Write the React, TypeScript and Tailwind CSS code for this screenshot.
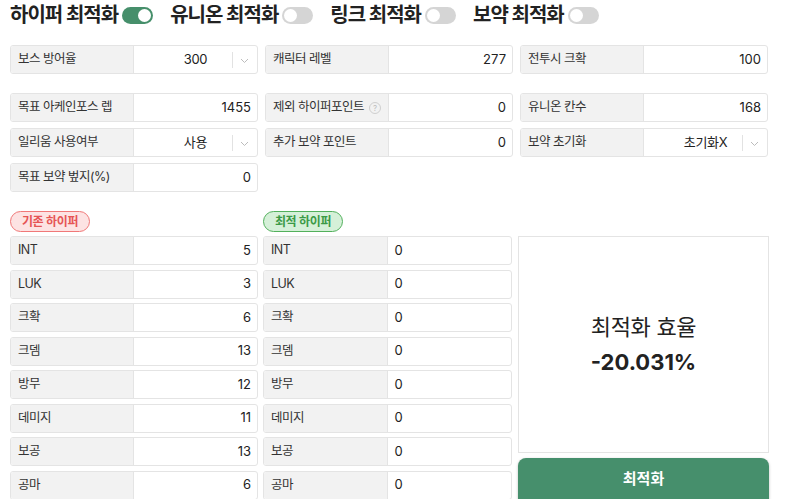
import React from "react";

function Toggle({ on }: { on: boolean }) {
  return (
    <div
      className={`flex h-[17px] w-[31px] items-center rounded-full px-[2px] ${
        on ? "justify-end bg-[#468f6b]" : "justify-start bg-[#d5d5d5]"
      }`}
    >
      <div className="h-[13px] w-[13px] rounded-full bg-white" />
    </div>
  );
}

function TitleItem({ text, on }: { text: string; on: boolean }) {
  return (
    <div className="flex items-center gap-[4px]">
      <span className="whitespace-nowrap text-[20px] font-bold leading-none tracking-[-1px] text-[#222]">
        {text}
      </span>
      <Toggle on={on} />
    </div>
  );
}

function Chevron() {
  return (
    <svg width="9" height="6" viewBox="0 0 9 6" fill="none">
      <path d="M1 1l3.5 3.5L8 1" stroke="#bcbcbc" strokeWidth="1" />
    </svg>
  );
}

function Field({
  label,
  value,
  select,
  help,
  align = "right",
}: {
  label: string;
  value: string;
  select?: boolean;
  help?: boolean;
  align?: "right" | "left";
}) {
  return (
    <div className="flex h-[29px] overflow-hidden rounded-[3px] border border-[#e4e4e4] text-[13px]">
      <div className="flex w-1/2 items-center gap-[5px] whitespace-nowrap border-r border-[#e4e4e4] bg-[#f2f2f2] pl-[7px] text-[#333]">
        <span className="text-[12.5px] tracking-[-0.5px]">{label}</span>
        {help && (
          <span className="flex h-[12px] w-[12px] items-center justify-center rounded-full border border-[#cfcfcf] text-[8px] leading-none text-[#bdbdbd]">
            ?
          </span>
        )}
      </div>
      {select ? (
        <div className="relative flex w-1/2 items-center justify-center text-[#222]">
          <span className="tracking-[-0.3px]">{value}</span>
          <div className="absolute right-[24px] top-[6px] h-[16px] w-px bg-[#e2e2e2]" />
          <div className="absolute right-[8px] top-[12px]">
            <Chevron />
          </div>
        </div>
      ) : (
        <div
          className={`flex w-1/2 items-center text-[#222] ${
            align === "right" ? "justify-end pr-[6px]" : "justify-start pl-[7px]"
          }`}
        >
          {value}
        </div>
      )}
    </div>
  );
}

const stats: [string, string][] = [
  ["INT", "5"],
  ["LUK", "3"],
  ["크확", "6"],
  ["크뎀", "13"],
  ["방무", "12"],
  ["데미지", "11"],
  ["보공", "13"],
  ["공마", "6"],
];

export default function App() {
  return (
    <div className="h-[499px] w-[790px] overflow-hidden bg-white pl-[10px] font-['Inter','Noto_Sans_CJK_KR',sans-serif]">
      <div className="flex h-[28px] items-center gap-[17px] pt-[2px]">
        <TitleItem text="하이퍼 최적화" on />
        <TitleItem text="유니온 최적화" on={false} />
        <TitleItem text="링크 최적화" on={false} />
        <TitleItem text="보약 최적화" on={false} />
      </div>

      <div className="mt-[17px] grid w-[758px] grid-cols-3 gap-x-[7px]">
        <Field label="보스 방어율" value="300" select />
        <Field label="캐릭터 레벨" value="277" />
        <Field label="전투시 크확" value="100" />
      </div>

      <div className="mt-[19px] grid w-[758px] grid-cols-3 gap-x-[7px] gap-y-[6px]">
        <Field label="목표 아케인포스 렙" value="1455" />
        <Field label="제외 하이퍼포인트" value="0" help />
        <Field label="유니온 칸수" value="168" />
        <Field label="일리움 사용여부" value="사용" select />
        <Field label="추가 보약 포인트" value="0" />
        <Field label="보약 초기화" value="초기화X" select />
        <Field label="목표 보약 벞지(%)" value="0" />
      </div>

      <div className="mt-[19px] flex">
        <div className="w-[248px]">
          <div className="flex h-[21px] w-[80px] items-center justify-center rounded-full border border-[#f07878] bg-[#fde3e3] text-[12px] font-bold tracking-[-0.3px] text-[#e65555]">
            기존 하이퍼
          </div>
          <div className="mt-[4px] flex flex-col gap-[4.5px]">
            {stats.map(([k, v]) => (
              <Field key={k} label={k} value={v} />
            ))}
          </div>
        </div>
        <div className="ml-[5px] w-[249px]">
          <div className="flex h-[21px] w-[80px] items-center justify-center rounded-full border border-[#52b05c] bg-[#d5f0d8] text-[12px] font-bold tracking-[-0.3px] text-[#3b9a46]">
            최적 하이퍼
          </div>
          <div className="mt-[4px] flex flex-col gap-[4.5px]">
            {stats.map(([k]) => (
              <Field key={k} label={k} value="0" align="left" />
            ))}
          </div>
        </div>
        <div className="ml-[6px] w-[251px] pt-[25px]">
          <div className="flex h-[217px] flex-col items-center justify-center border border-[#e4e4e4] text-[#222]">
            <div className="text-[22px] leading-[30px] tracking-[-0.3px]">최적화 효율</div>
            <div className="mt-[5px] text-[22px] font-bold leading-[30px]">-20.031%</div>
          </div>
          <button className="mt-[5px] flex h-[48px] w-full items-center justify-center rounded-[8px] bg-[#468f6c] pb-[6px] text-[15px] font-bold text-white shadow-[0_1px_3px_rgba(0,0,0,0.25)]">
            최적화
          </button>
        </div>
      </div>
    </div>
  );
}
